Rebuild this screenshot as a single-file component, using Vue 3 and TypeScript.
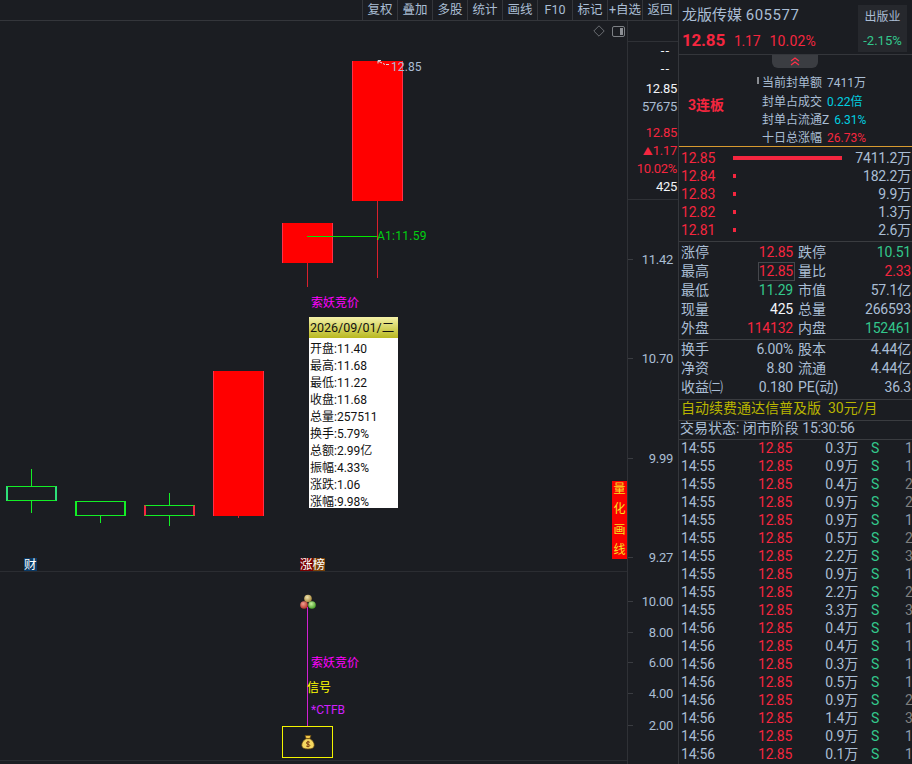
<script setup lang="ts">
interface Candle { x: number; top: number; h: number; wickTop: number; wickH: number; kind: string }
interface Mark { y: number; text: string; cls?: string }

// K线
const candles: Candle[] = [
  { x: 6, top: 486, h: 15, wickTop: 469, wickH: 44, kind: 'down teal' },
  { x: 75, top: 501, h: 15, wickTop: 501, wickH: 22, kind: 'down' },
  { x: 144, top: 505, h: 11, wickTop: 493, wickH: 33, kind: 'down redside' },
  { x: 213, top: 371, h: 145, wickTop: 371, wickH: 147, kind: 'up' },
  { x: 282, top: 223, h: 40, wickTop: 223, wickH: 64, kind: 'up' },
  { x: 352, top: 61, h: 140, wickTop: 61, wickH: 217, kind: 'up' },
]

const axisMarks: Mark[] = [
  { y: 50, text: '--', cls: 'tip white dash' },
  { y: 68, text: '--', cls: 'tip white dash' },
  { y: 88, text: '12.85', cls: 'tip white' },
  { y: 106, text: '57675', cls: 'tip' },
  { y: 132, text: '12.85', cls: 'tip red' },
  { y: 150, text: '1.17', cls: 'tip red tri' },
  { y: 168, text: '10.02%', cls: 'tip red' },
  { y: 186, text: '425', cls: 'tip white' },
  { y: 259, text: '11.42' },
  { y: 358, text: '10.70' },
  { y: 458, text: '9.99' },
  { y: 557, text: '9.27' },
  { y: 601, text: '10.00' },
  { y: 632, text: '8.00' },
  { y: 662, text: '6.00' },
  { y: 693, text: '4.00' },
  { y: 725, text: '2.00' },
]
const axisTicks = axisMarks.filter((m) => !m.cls).map((m) => m.y)

const tooltipRows = [
  '开盘:11.40', '最高:11.68', '最低:11.22', '收盘:11.68', '总量:257511',
  '换手:5.79%', '总额:2.99亿', '振幅:4.33%', '涨跌:1.06', '涨幅:9.98%',
]

const tools = ['复权', '叠加', '多股', '统计', '画线', 'F10', '标记', '+自选', '返回']

const fengdan = [
  { label: '当前封单额', value: '7411万', cls: '' },
  { label: '封单占成交', value: '0.22倍', cls: 'cyan' },
  { label: '封单占流通Z', value: '6.31%', cls: 'cyan' },
  { label: '十日总涨幅', value: '26.73%', cls: 'red' },
]

const orders = [
  { price: '12.85', bar: 109, vol: '7411.2万' },
  { price: '12.84', bar: 3, vol: '182.2万' },
  { price: '12.83', bar: 3, vol: '9.9万' },
  { price: '12.82', bar: 3, vol: '1.3万' },
  { price: '12.81', bar: 3, vol: '2.6万' },
]

const stats1 = [
  ['涨停', '12.85', 'red', '跌停', '10.51', 'green'],
  ['最高', '12.85', 'red boxed', '量比', '2.33', 'red'],
  ['最低', '11.29', 'green', '市值', '57.1亿', ''],
  ['现量', '425', 'white', '总量', '266593', ''],
  ['外盘', '114132', 'red', '内盘', '152461', 'green'],
]

const stats2 = [
  ['换手', '6.00%', '', '股本', '4.44亿', ''],
  ['净资', '8.80', '', '流通', '4.44亿', ''],
  ['收益㈡', '0.180', '', 'PE(动)', '36.3', ''],
]

// 分笔成交
const ticks: [string, string, string][] = [
  ['14:55', '0.3万', '1'], ['14:55', '0.9万', '1'], ['14:55', '0.4万', '2'],
  ['14:55', '0.9万', '2'], ['14:55', '0.9万', '1'], ['14:55', '0.5万', '2'],
  ['14:55', '2.2万', '3'], ['14:55', '0.9万', '1'], ['14:55', '2.2万', '2'],
  ['14:55', '3.3万', '3'], ['14:56', '0.4万', '1'], ['14:56', '0.4万', '1'],
  ['14:56', '0.3万', '1'], ['14:56', '0.5万', '1'], ['14:56', '0.9万', '2'],
  ['14:56', '1.4万', '3'], ['14:56', '0.9万', '1'], ['14:56', '0.1万', '1'],
]
</script>

<template>
  <div class="screen">
    <div class="left">
      <div class="toolbar">
        <span v-for="t in tools" :key="t" class="tool">{{ t }}</span>
      </div>
      <div class="chart">
        <svg class="ico diamond" width="12" height="12" viewBox="0 0 12 12">
          <path d="M6 .8 11.2 6 6 11.2.8 6z" fill="none" stroke="#6a6d72" />
        </svg>
        <svg class="ico panel" width="13" height="11" viewBox="0 0 13 11">
          <rect x=".5" y=".5" width="12" height="10" rx="1.5" fill="none" stroke="#7d8085" />
          <rect x="8" y="2" width="3" height="7" fill="#8d9095" />
        </svg>

        <template v-for="c in candles" :key="c.x">
          <i class="wick" :class="c.kind" :style="{ left: c.x + 25 + 'px', top: c.wickTop - 21 + 'px', height: c.wickH + 'px' }"></i>
          <i class="candle" :class="c.kind" :style="{ left: c.x + 'px', top: c.top - 21 + 'px', height: c.h + 'px' }"></i>
        </template>

        <i class="a1line"></i>
        <span class="lbl a1">A1:11.59</span>
        <span class="lbl hi">12.85</span>
        <svg class="ico arrow" width="13" height="7" viewBox="0 0 13 7">
          <path d="M1 .5h3M1 .5v3M1 1l4 2M6 3.500l2 1M9 4.500h3" fill="none" stroke="#d8dce4" />
        </svg>

        <span class="lbl magenta m1">索妖竞价</span>

        <div class="tooltip">
          <div class="tt-head">2026/09/01/二</div>
          <div v-for="r in tooltipRows" :key="r" class="tt-row">{{ r }}</div>
        </div>

        <div class="quant">
          <span>量</span><span>化</span><span>画</span><span>线</span>
        </div>

        <span class="tag cai">财</span>
        <span class="tag zhang"><b>涨</b><b>榜</b></span>

        <i class="hline split"></i>
        <i class="hline bottom"></i>

        <i class="signal"></i>
        <svg class="ico balls" width="16" height="16" viewBox="0 0 16 16">
          <defs>
            <radialGradient id="by" cx=".4" cy=".35" r=".7"><stop offset="0" stop-color="#f0e4b0" /><stop offset="1" stop-color="#a08030" /></radialGradient>
            <radialGradient id="br" cx=".4" cy=".35" r=".7"><stop offset="0" stop-color="#f0a090" /><stop offset="1" stop-color="#b02a20" /></radialGradient>
            <radialGradient id="bg" cx=".4" cy=".35" r=".7"><stop offset="0" stop-color="#c8f0a0" /><stop offset="1" stop-color="#3f9a20" /></radialGradient>
          </defs>
          <circle cx="8" cy="4.500" r="3.800" fill="url(#by)" />
          <circle cx="4" cy="11" r="3.800" fill="url(#br)" />
          <circle cx="12" cy="11" r="3.800" fill="url(#bg)" />
        </svg>
        <span class="lbl magenta m2">索妖竞价</span>
        <span class="lbl yellow xh">信号</span>
        <span class="lbl ctfb">*CTFB</span>
        <div class="bagbox">
          <svg width="14" height="16" viewBox="0 0 14 16">
            <path d="M4 1.500h6L8.800 4.500H5.200z" fill="#f2c84a" stroke="#6b4a10" stroke-width=".7" />
            <path d="M5 4.700h4c3 1.800 4.500 4.500 4.200 7-.3 2.300-2.500 3.300-6.200 3.300s-5.900-1-6.200-3.300c-.3-2.500 1.200-5.200 4.200-7z" fill="#f6d860" stroke="#6b4a10" stroke-width=".7" />
            <path d="M8.800 8.300C8 7.500 5.400 7.600 5.400 9c0 1.600 3.400.9 3.400 2.500 0 1.400-2.700 1.400-3.600.5M7 6.800v6.400" fill="none" stroke="#7a3a10" stroke-width="1" />
          </svg>
        </div>

        <div class="axis">
          <i class="axis-line one"></i>
          <i class="axis-line two"></i>
          <i v-for="y in axisTicks" :key="y" class="axis-tick" :style="{ top: y - 21 + 'px' }"></i>
          <span v-for="m in axisMarks" :key="m.y" class="axis-mark" :class="m.cls" :style="{ top: m.y - 30 + 'px' }">{{ m.text }}</span>
        </div>
      </div>
    </div>

    <div class="side">
      <div class="head">
        <div class="head-info">
          <div class="stock">龙版传媒 <span class="num code">605577</span></div>
          <div class="quote red">
            <b class="num">12.85</b><span class="num">1.17</span><span class="pct">10.02%</span>
          </div>
        </div>
        <div class="sector">
          <div>出版业</div>
          <div class="green num">-2.15%</div>
        </div>
      </div>

      <div class="seal">
        <div class="fold">
          <svg width="12" height="9" viewBox="0 0 12 9">
            <path d="M2 4 6 1l4 3M2 8l4-3 4 3" fill="none" stroke="#ff3048" stroke-width="1.200" />
          </svg>
        </div>
        <b class="board red">3连板</b>
        <div class="seal-list">
          <div v-for="f in fengdan" :key="f.label" class="seal-row">
            <span>{{ f.label }}</span><span :class="f.cls">{{ f.value }}</span>
          </div>
          <i class="pin"></i>
        </div>
      </div>

      <div class="orders">
        <div v-for="o in orders" :key="o.price" class="order">
          <span class="red num">{{ o.price }}</span>
          <span class="bar-wrap"><i class="bar" :style="{ width: o.bar + 'px' }"></i></span>
          <span class="num">{{ o.vol }}</span>
        </div>
      </div>

      <div class="stats">
        <div v-for="s in stats1" :key="s[0]" class="stat">
          <span>{{ s[0] }}</span><span class="num val" :class="s[2]">{{ s[1] }}</span>
          <span>{{ s[3] }}</span><span class="num val" :class="s[5]">{{ s[4] }}</span>
        </div>
      </div>

      <div class="stats second">
        <div v-for="s in stats2" :key="s[0]" class="stat">
          <span>{{ s[0] }}</span><span class="num val">{{ s[1] }}</span>
          <span>{{ s[3] }}</span><span class="num val">{{ s[4] }}</span>
        </div>
      </div>

      <div class="ad">自动续费通达信普及版<span class="ad-price">30元/月</span></div>
      <div class="state">交易状态: 闭市阶段 <span class="num">15:30:56</span></div>

      <div class="ticks">
        <div v-for="(t, i) in ticks" :key="i" class="tick">
          <span class="num">{{ t[0] }}</span>
          <span class="num red">12.85</span>
          <span class="num t-vol">{{ t[1] }}</span>
          <span class="green s">S</span>
          <span class="num cnt" :class="{ dim: t[2] !== '1' }">{{ t[2] }}</span>
        </div>
      </div>
    </div>
  </div>
</template>

<style>
html,
body {
  margin: 0;
  background: #1b1d22;
  overflow: hidden;
}
</style>

<style scoped>
.screen {
  display: flex;
  width: 912px;
  height: 764px;
  overflow: hidden;
  background: #1b1d22;
  color: #aabdd4;
  font-family: Roboto, "Noto Sans CJK SC", sans-serif;
  font-size: 14px;
}
.num {
  letter-spacing: -0.2px;
}
.red {
  color: #f5263f;
}
.green {
  color: #33c78c;
}
.cyan {
  color: #00cfe0;
}
.white {
  color: #f2f4f8;
}
.left {
  display: flex;
  flex-direction: column;
  width: 678px;
  flex: none;
}
.toolbar {
  display: flex;
  justify-content: flex-end;
  height: 20px;
  padding-right: 1px;
  border-bottom: 1px solid #34363b;
}
.tool {
  width: 34px;
  border-left: 1px solid #34363b;
  line-height: 20px;
  text-align: center;
  font-size: 12.500px;
  white-space: nowrap;
  overflow: hidden;
}
.chart {
  position: relative;
  flex: 1;
}
.ico {
  position: absolute;
}
.diamond {
  left: 593px;
  top: 4px;
}
.panel {
  left: 612px;
  top: 5px;
}
.candle {
  position: absolute;
  box-sizing: border-box;
  width: 51px;
}
.wick {
  position: absolute;
  width: 1px;
}
.candle.up {
  background: #ff0000;
  border-right: 1px solid #ff3048;
  border-left: 1px solid #ff3048;
}
.wick.up {
  background: #d8202c;
}
.candle.down {
  background: #1b1d22;
  border: 1px solid #13ef26;
  border-left-width: 2px;
  border-right-width: 2px;
}
.candle.teal {
  border-left-color: #2ee07a;
  border-right-color: #2ee07a;
}
.candle.redside {
  border-left-color: #f5263f;
  border-right-color: #f5263f;
}
.wick.down {
  background: #13ef26;
}
.a1line {
  position: absolute;
  left: 307px;
  top: 215px;
  width: 70px;
  height: 1px;
  background: #00e800;
}
.lbl {
  position: absolute;
  font-size: 12px;
  line-height: 14px;
  white-space: nowrap;
}
.a1 {
  left: 377px;
  top: 208px;
  color: #00d010;
  letter-spacing: .25px;
}
.hi {
  left: 391px;
  top: 39px;
  letter-spacing: .1px;
}
.arrow {
  left: 377px;
  top: 39px;
}
.magenta {
  color: #ff00ff;
}
.yellow {
  color: #ffff00;
}
.m1 {
  left: 311px;
  top: 275px;
}
.m2 {
  left: 311px;
  top: 635px;
}
.xh {
  left: 307px;
  top: 660px;
}
.ctfb {
  left: 311px;
  top: 682px;
  color: #d020ff;
}
.tooltip {
  position: absolute;
  left: 309px;
  top: 296px;
  width: 89px;
  height: 191px;
  background: #fff;
  color: #111;
  font-size: 12px;
  overflow: hidden;
}
.tt-head {
  height: 21px;
  margin-bottom: 3px;
  padding-left: 1px;
  font-size: 12.500px;
  line-height: 21px;
  background: linear-gradient(#f5f2a8, #b8b820);
  white-space: nowrap;
}
.tt-row {
  height: 17px;
  padding-left: 1px;
  line-height: 17px;
}
.quant {
  position: absolute;
  left: 612px;
  top: 460px;
  display: flex;
  flex-direction: column;
  justify-content: space-between;
  width: 15px;
  height: 78px;
  background: #f80000;
  color: #f8e020;
  font-size: 12px;
  line-height: 17px;
  text-align: center;
}
.tag {
  position: absolute;
  top: 537px;
  height: 13px;
  font-size: 12.500px;
  line-height: 13px;
  color: #fff;
}
.cai {
  left: 24px;
  background: #0a3a66;
}
.zhang {
  left: 300px;
  display: flex;
}
.zhang b {
  font-weight: 400;
}
.zhang b:first-child {
  background: #780000;
}
.zhang b:last-child {
  background: #7a4208;
}
.hline {
  position: absolute;
  left: 0;
  width: 627px;
  height: 1px;
  background: #2b2d32;
}
.split {
  top: 550px;
}
.bottom {
  top: 739px;
}
.signal {
  position: absolute;
  left: 307px;
  top: 586px;
  width: 1px;
  height: 119px;
  background: #d020d0;
}
.balls {
  left: 300px;
  top: 573px;
}
.bagbox {
  position: absolute;
  left: 282px;
  top: 705px;
  display: flex;
  align-items: center;
  justify-content: center;
  box-sizing: border-box;
  width: 51px;
  height: 32px;
  border: 1px solid #f4f400;
}
.axis {
  position: absolute;
  left: 627px;
  top: 0;
  bottom: 0;
  width: 51px;
  border-left: 1px solid #2f3136;
  box-sizing: border-box;
}
.axis-line {
  position: absolute;
  left: 0;
  right: 0;
  height: 1px;
  background: #2f3136;
}
.one {
  top: 20px;
}
.two {
  top: 178px;
}
.axis-tick {
  position: absolute;
  left: 0;
  width: 5px;
  height: 1px;
  background: #3a3c41;
}
.axis-mark {
  position: absolute;
  right: 5px;
  margin-top: 1px;
  font-size: 13px;
  line-height: 18px;
  letter-spacing: -0.3px;
  white-space: nowrap;
}
.axis-mark.tip {
  right: 1px;
}
.axis-mark.dash {
  right: 8px;
  letter-spacing: 1px;
}
.tri::before {
  content: '▲';
  font-size: 10px;
  letter-spacing: 0;
}
.side {
  display: flex;
  flex-direction: column;
  width: 234px;
  flex: none;
  border-left: 1px solid #34363b;
  box-sizing: border-box;
}
.head {
  display: flex;
  justify-content: space-between;
  height: 55px;
  padding: 5px 5px 0 3px;
  box-sizing: border-box;
  border-bottom: 1px solid #34363b;
}
.stock {
  margin-top: 1px;
  font-size: 15px;
  line-height: 18px;
}
.code {
  letter-spacing: .5px;
}
.quote {
  display: flex;
  align-items: baseline;
  gap: 9px;
  margin-top: 6px;
}
.quote b {
  font-size: 17px;
}
.pct {
  letter-spacing: .2px;
}
.sector {
  width: 49px;
  height: 47px;
  box-sizing: border-box;
  background: #26282d;
  text-align: center;
  font-size: 12px;
  line-height: 24px;
}
.sector .green {
  font-size: 13px;
  letter-spacing: 0;
}
.seal {
  position: relative;
  display: flex;
  height: 93px;
  box-sizing: border-box;
  border-bottom: 1px solid #d89a30;
}
.fold {
  position: absolute;
  left: 93px;
  top: 0;
  display: flex;
  align-items: center;
  justify-content: center;
  width: 46px;
  height: 13px;
  background: #3b3d42;
  border-radius: 0 0 6px 6px;
}
.board {
  margin: 40px 0 0 9px;
  font-size: 14px;
  line-height: 20px;
}
.seal-list {
  position: absolute;
  left: 83px;
  top: 19px;
}
.seal-row {
  display: flex;
  gap: 5px;
  height: 18px;
  font-size: 12px;
  line-height: 18px;
}
.seal-row:first-child {
  height: 19px;
}
.pin {
  position: absolute;
  left: -5px;
  top: 3px;
  width: 2px;
  height: 7px;
  background: #8a8d92;
}
.orders {
  padding: 2px 0 2px;
  border-bottom: 1px solid #3a3c40;
}
.order {
  display: flex;
  height: 18px;
  padding: 0 1px 0 2px;
  align-items: center;
  line-height: 18px;
}
.bar-wrap {
  display: flex;
  flex: 1;
  padding-left: 18px;
}
.bar {
  height: 4px;
  background: #f5263f;
}
.stats {
  padding: 1px 0 1px;
  border-bottom: 1px solid #3a3c40;
}
.second {
  padding: 0 0 2px;
}
.stat {
  display: grid;
  grid-template-columns: 40px 72px 44px 1fr;
  height: 19px;
  padding: 0 1px 0 2px;
  line-height: 19px;
  white-space: nowrap;
}
.val {
  text-align: right;
}
.stat span:nth-child(3) {
  padding-left: 5px;
}
.boxed {
  box-sizing: border-box;
  margin: 0 -2px 0 0;
  padding-right: 1px;
  justify-self: end;
  border: 1px solid #45474c;
  line-height: 17px;
}
.ad {
  display: flex;
  gap: 7px;
  height: 20px;
  padding-left: 2px;
  border-bottom: 1px solid #3a3c40;
  color: #b8b400;
  line-height: 16px;
  white-space: nowrap;
}
.state {
  height: 18px;
  padding-left: 1px;
  border-bottom: 1px solid #3a3c40;
  line-height: 15px;
  white-space: nowrap;
}
.tick {
  display: grid;
  grid-template-columns: 77px 60px 40px 14px 1fr;
  height: 18px;
  padding-left: 2px;
  line-height: 16px;
  white-space: nowrap;
}
.t-vol {
  text-align: right;
}
.s {
  padding-left: 13px;
}
.cnt {
  padding-left: 33px;
  color: #8e9cae;
}
.dim {
  color: #7e7e7e;
}
</style>
